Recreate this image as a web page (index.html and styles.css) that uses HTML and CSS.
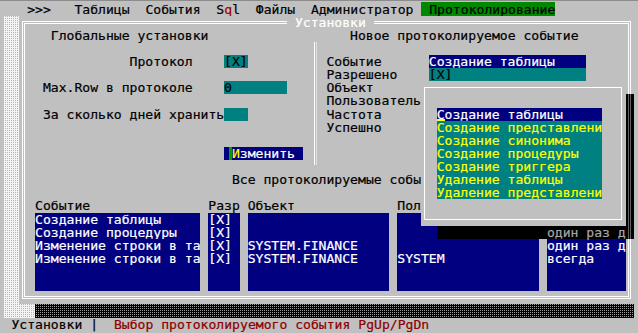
FILE: index.html
```html
<!DOCTYPE html>
<html lang="ru">
<head>
<meta charset="utf-8">
<link rel="stylesheet" href="styles.css">
</head>
<body>
<div class="screen">
  <div class="menubar">   &gt;&gt;&gt;   Таблицы  События  S<span class="hot">q</span>l  Файлы  Администратор <span class="menu-sel"> Протоколирование</span></div>
  <div class="desktop"></div>
  <div class="win-shadow"></div>
  <div class="window"><div class="frame"></div></div>
  <div class="win-title"> Установки </div>

  <div class="h-global">Глобальные установки</div>
  <div class="h-new">Новое протоколируемое событие</div>
  <div class="sep"></div>

  <div class="lbl-proto">Протокол</div>
  <div class="fld teal fld-proto">[X]</div>
  <div class="lbl-event">Событие</div>
  <div class="fld navy fld-event">Создание таблицы</div>
  <div class="lbl-allowed">Разрешено</div>
  <div class="fld teal fld-allowed">[X]</div>
  <div class="lbl-maxrow">Max.Row в протоколе</div>
  <div class="fld teal fld-maxrow">0</div>
  <div class="lbl-obj">Объект</div>
  <div class="lbl-user">Пользователь</div>
  <div class="lbl-days">За сколько дней хранить</div>
  <div class="fld teal fld-days"></div>
  <div class="lbl-freq">Частота</div>
  <div class="lbl-ok">Успешно</div>
  <div class="fld navy btn"><span class="btn-cur"> </span><span class="hk">И</span>зменить </div>
  <div class="h-all">Все протоколируемые собы</div>

  <div class="col-h1">Событие</div>
  <div class="col-h2">Разр</div>
  <div class="col-h3">Объект</div>
  <div class="col-h4">Пол</div>

  <div class="box box1">
    <div class="row">Создание таблицы</div>
    <div class="row">Создание процедуры</div>
    <div class="row">Изменение строки в та</div>
    <div class="row">Изменение строки в та</div>
  </div>
  <div class="box box2">
    <div class="row">[X]</div>
    <div class="row">[X]</div>
    <div class="row">[X]</div>
    <div class="row">[X]</div>
  </div>
  <div class="box box3">
    <div class="row"></div>
    <div class="row"></div>
    <div class="row">SYSTEM.FINANCE</div>
    <div class="row">SYSTEM.FINANCE</div>
  </div>
  <div class="box box4">
    <div class="row"></div>
    <div class="row"></div>
    <div class="row"></div>
    <div class="row">SYSTEM</div>
  </div>
  <div class="box box5">
    <div class="row"></div>
    <div class="row"></div>
    <div class="row">один раз д</div>
    <div class="row">всегда</div>
  </div>

  <div class="popup"><div class="popup-frame"></div></div>
  <div class="plist">
    <div class="row sel"><span class="cur">С</span>оздание таблицы</div>
    <div class="row">Создание представлени</div>
    <div class="row">Создание синонима</div>
    <div class="row">Создание процедуры</div>
    <div class="row">Создание триггера</div>
    <div class="row">Удаление таблицы</div>
    <div class="row">Удаление представлени</div>
  </div>
  <div class="shadow-r"></div>
  <div class="shadow-b"></div>
  <div class="shadow-text">один раз д</div>

  <div class="statusbar"> Установки |  <span class="msg">Выбор протоколируемого события PgUp/PgDn</span></div>
</div>
</body>
</html>
```

FILE: styles.css
```css
html, body {
  margin: 0;
  padding: 0;
}
body {
  width: 638px;
  height: 333px;
  overflow: hidden;
  background: #c0c0c0;
  box-shadow: inset 0 1px 0 #8c8c8c;
}
.screen {
  display: grid;
  grid-template-columns: repeat(80, 7.887px);
  grid-template-rows: repeat(25, 13.14px);
  margin: 2.5px 0 0 3.5px;
  font-family: "DejaVu Sans Mono", monospace;
  font-size: 13.1px;
  line-height: 13.14px;
  white-space: pre;
  color: #000;
  -webkit-text-stroke: 0.2px currentColor;
}
.menubar { grid-area: 1 / 1 / 2 / 81; }
.hot { color: #a00000; }
.menu-sel { background: #008800; }

.desktop {
  grid-area: 2 / 1 / 25 / 81;
  background-color: #b4b4b4;
  background-image:
    repeating-linear-gradient(90deg, #f4f4f4 0 1px, transparent 1px 2px),
    repeating-linear-gradient(0deg, #f4f4f4 0 1px, transparent 1px 2px);
}
.win-shadow {
  grid-area: 24 / 5 / 25 / 81;
  background-color: #9a9a9a;
  background-image:
    repeating-linear-gradient(90deg, #000 0 1px, transparent 1px 2px),
    repeating-linear-gradient(0deg, #000 0 1px, transparent 1px 2px);
}
.window {
  grid-area: 2 / 3 / 24 / 81;
  background: #c0c0c0;
  padding: 5px 2.5px 5px 2.4px;
}
.frame {
  height: 100%;
  box-sizing: border-box;
  border: 3px double #fff;
}
.win-title {
  grid-area: 2 / 37 / 3 / 48;
  background: #c0c0c0;
  color: #fff;
}

.h-global { grid-area: 3 / 7; }
.h-new { grid-area: 3 / 45; }
.sep {
  grid-area: 4 / 40 / 14 / 41;
  margin: 0 0 8px 3.5px;
  border-left: 1px solid #fff;
  border-right: 1px solid #e0e0e0;
  width: 1px;
}

.fld { overflow: hidden; }
.teal { background: #008080; color: #000; }
.navy { background: #000080; color: #fff; }

.lbl-proto { grid-area: 5 / 17; }
.fld-proto { grid-area: 5 / 29 / 6 / 32; }
.lbl-event { grid-area: 5 / 42; }
.fld-event { grid-area: 5 / 55 / 6 / 75; }
.lbl-allowed { grid-area: 6 / 42; }
.fld-allowed { grid-area: 6 / 55 / 7 / 75; }
.lbl-maxrow { grid-area: 7 / 6; }
.fld-maxrow { grid-area: 7 / 29 / 8 / 37; }
.lbl-obj { grid-area: 7 / 42; }
.lbl-user { grid-area: 8 / 42; }
.lbl-days { grid-area: 9 / 6; }
.fld-days { grid-area: 9 / 29 / 10 / 32; }
.lbl-freq { grid-area: 9 / 42; }
.lbl-ok { grid-area: 10 / 42; }
.btn { grid-area: 12 / 29 / 13 / 39; }
.btn-cur {
  background: linear-gradient(90deg, transparent 0 5px, #00a000 5px);
}
.hk { color: #ffff00; }
.h-all { grid-area: 14 / 30; }

.col-h1 { grid-area: 16 / 5; }
.col-h2 { grid-area: 16 / 27; }
.col-h3 { grid-area: 16 / 32; }
.col-h4 { grid-area: 16 / 51; }

.box, .plist {
  white-space: normal;
  overflow: hidden;
}
.row {
  white-space: pre;
  height: 13.14px;
  overflow: hidden;
}
.box {
  background: #000080;
  color: #fff;
}
.box1 { grid-area: 17 / 5 / 23 / 26; }
.box2 { grid-area: 17 / 27 / 23 / 31; }
.box3 { grid-area: 17 / 32 / 23 / 50; }
.box4 { grid-area: 17 / 51 / 23 / 69; }
.box5 { grid-area: 17 / 70 / 23 / 80; }

.popup {
  grid-area: 7 / 54 / 18 / 80;
  background: #c0c0c0;
  padding: 6px 3.5px 6px 3.5px;
}
.popup-frame {
  height: 100%;
  box-sizing: border-box;
  border: 1px solid #fff;
}
.plist {
  grid-area: 9 / 56 / 16 / 77;
  background: #008080;
  color: #ffff00;
}
.row.sel { background: #000080; color: #fff; }
.cur {
  display: inline-block;
  height: 13.14px;
  vertical-align: top;
  background: linear-gradient(to top, #ffff00 0 2px, transparent 2px);
}
.shadow-r {
  grid-area: 8 / 80 / 19 / 81;
  background: linear-gradient(90deg, #000 0 2.4px, #606060 2.4px 3.4px, #000 3.4px 4.4px, #606060 4.4px 5.4px, #000 5.4px);
}
.shadow-b {
  grid-area: 18 / 56 / 19 / 80;
  background: #000;
}
.shadow-text {
  grid-area: 18 / 70;
  color: #a8a8a8;
}

.statusbar { grid-area: 25 / 1 / 26 / 81; }
.msg { color: #8c0000; }
```
